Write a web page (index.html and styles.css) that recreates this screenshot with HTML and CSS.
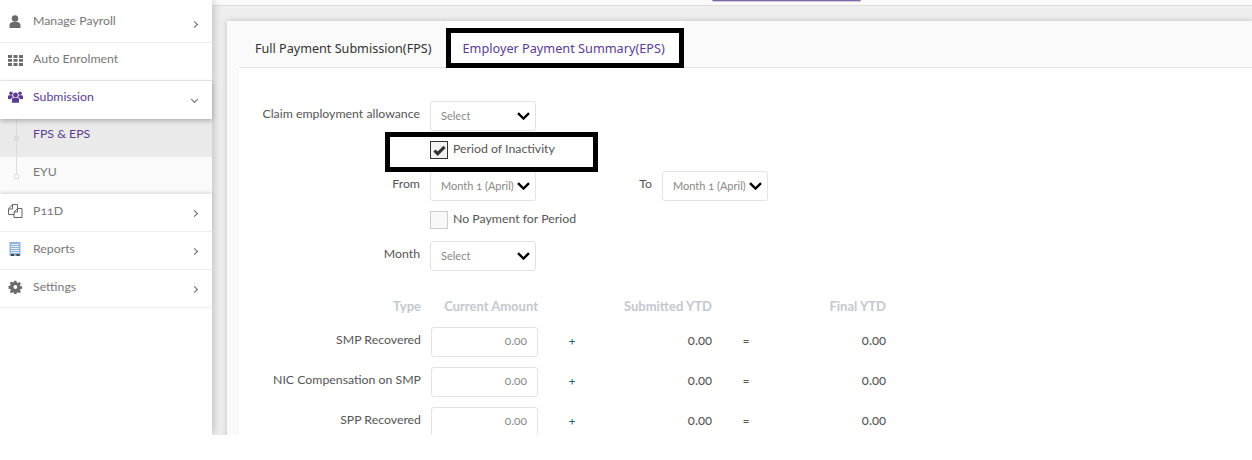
FILE: index.html
```html
<!DOCTYPE html>
<html lang="en">
<head>
<meta charset="utf-8">
<title>Submission</title>
<link rel="stylesheet" href="styles.css">
</head>
<body>
<div class="app">
  <aside class="sidebar">
    <ul class="menu">
      <li class="item">
        <svg class="ic" viewBox="0 0 15 14"><circle cx="7" cy="3.500" r="3.200"/><path d="M1.500 13V10C1.500 8 3.500 7 5 7H9C10.500 7 12.500 8 12.500 10V13Z"/></svg>
        <span class="lbl">Manage Payroll</span><span class="chev r"></span>
      </li>
      <li class="item">
        <svg class="ic" viewBox="0 0 15 14"><path d="M0 2h4v3H0zM5.500 2h4v3h-4zM11 2h4v3h-4zM0 6h4v2.800H0zM5.500 6h4v2.800h-4zM11 6h4v2.800h-4zM0 10h4v3H0zM5.500 10h4v3h-4zM11 10h4v3h-4z"/></svg>
        <span class="lbl">Auto Enrolment</span>
      </li>
      <li class="item open">
        <svg class="ic" viewBox="0 0 16 14"><circle cx="8" cy="4.800" r="2.600"/><circle cx="3.200" cy="3" r="1.900"/><circle cx="12.800" cy="3" r="1.900"/><path d="M4.200 13V9.800C4.200 8.500 5 7.800 6 7.800H10C11 7.800 11.800 8.500 11.800 9.800V13Z"/><path d="M0 9V6.500C0 5.500.7 5.200 1.500 5.200H4.500C4.800 6.200 5 6.800 5.500 7.200 4 7.500 3.300 8.300 3.200 9.500Z"/><path d="M16 9V6.500C16 5.500 15.300 5.200 14.500 5.200H11.500C11.200 6.200 11 6.800 10.500 7.200 12 7.500 12.700 8.300 12.800 9.500Z"/></svg>
        <span class="lbl">Submission</span><span class="chev d"></span>
      </li>
      <li class="sub active"><span class="dot"></span><span class="lbl">FPS &amp; EPS</span></li>
      <li class="sub last"><span class="dot"></span><span class="lbl">EYU</span></li>
      <li class="item after">
        <svg class="ic line" viewBox="0 0 15 14"><path d="M.5 5L4.500 .5H9.500V4.500M.5 5V10.500H6M.5 5H4.500V.5M6 8L9.500 4.500H14V13.500H6ZM6 8H9.500V4.500"/></svg>
        <span class="lbl">P11D</span><span class="chev r"></span>
      </li>
      <li class="item after">
        <svg class="ic" viewBox="0 0 15 14"><path d="M1.500 0h11v14h-11z" fill="#8fb3d9"/><path d="M3 2.500h8M3 4.500h8M3 6.500h8M3 8.500h8M3 10.500h8" stroke="#e6eef7" stroke-width="1"/><path d="M3 12h3v2H3zM8.500 12h3v2h-3z" fill="#444"/></svg>
        <span class="lbl">Reports</span><span class="chev r"></span>
      </li>
      <li class="item after">
        <svg class="ic" viewBox="0 0 15 14"><path fill-rule="evenodd" d="M5.800 0h2.400l.4 2 1.300.6 1.700-1.100 1.700 1.700-1.100 1.700.6 1.300 2 .4v2.400l-2 .4-.6 1.300 1.100 1.700-1.700 1.700-1.700-1.100-1.300.6-.4 2H5.800l-.4-2-1.300-.6-1.700 1.100-1.700-1.700 1.100-1.700-.6-1.300-2-.4V5.800l2-.4.600-1.300-1.100-1.700 1.700-1.700 1.700 1.100 1.300-.6zM7 4.800a2.200 2.200 0 1 0 0 4.400 2.200 2.200 0 0 0 0-4.400z" transform="translate(1.200 .8) scale(.88)"/></svg>
        <span class="lbl">Settings</span><span class="chev r"></span>
      </li>
    </ul>
  </aside>
  <div class="content">
    <div class="topbar"><span class="topbtn"></span></div>
    <main class="card">
      <nav class="tabs">
        <a class="tab">Full Payment Submission(FPS)</a>
        <a class="tab current">Employer Payment Summary(EPS)</a>
      </nav>
      <form class="form">
        <div class="row first">
          <label class="flabel">Claim employment allowance</label>
          <select class="sel"><option>Select</option></select>
        </div>
        <div class="row check-row">
          <span class="box checked"><svg viewBox="0 0 14 12"><path d="M1.500 6L5 9.500 12.500 2" fill="none" stroke="#333" stroke-width="3.400"/></svg></span>
          <span class="ctext">Period of Inactivity</span>
        </div>
        <div class="row period">
          <label class="flabel">From</label>
          <select class="sel"><option>Month 1 (April)</option></select>
          <label class="tolabel">To</label>
          <select class="sel"><option>Month 1 (April)</option></select>
        </div>
        <div class="row check-row">
          <span class="box"></span>
          <span class="ctext">No Payment for Period</span>
        </div>
        <div class="row month">
          <label class="flabel">Month</label>
          <select class="sel"><option>Select</option></select>
        </div>
        <div class="grid head">
          <span class="n">Type</span><span class="n">Current Amount</span><span></span><span class="n">Submitted YTD</span><span></span><span class="n">Final YTD</span>
        </div>
        <div class="grid">
          <span class="n name">SMP Recovered</span><input class="amount" value="0.00"><span class="op plus">+</span><span class="n val">0.00</span><span class="op">=</span><span class="n val">0.00</span>
        </div>
        <div class="grid">
          <span class="n name">NIC Compensation on SMP</span><input class="amount" value="0.00"><span class="op plus">+</span><span class="n val">0.00</span><span class="op">=</span><span class="n val">0.00</span>
        </div>
        <div class="grid">
          <span class="n name">SPP Recovered</span><input class="amount" value="0.00"><span class="op plus">+</span><span class="n val">0.00</span><span class="op">=</span><span class="n val">0.00</span>
        </div>
      </form>
    </main>
  </div>
  <div class="mark mark-tab"></div>
  <div class="mark mark-check"></div>
</div>
</body>
</html>
```
FILE: styles.css
```css
* { box-sizing: border-box; }
html, body { margin: 0; background: #fff; }
body { font-family: Lato, sans-serif; font-size: 12.3px; font-feature-settings: "onum" 1; color: #555; height: 460px; overflow: hidden; }
.app { position: relative; display: flex; height: 435px; overflow: hidden; background: #eee; }

.sidebar { width: 212px; flex: none; background: #fff; padding-top: 5px; box-shadow: 2px 0 8px rgba(0,0,0,.18); z-index: 2; }
.menu { list-style: none; margin: 0; padding: 0; }
.item { position: relative; display: flex; align-items: center; height: 38px; padding: 0 15px 6px 8px; border-bottom: 1px solid #eee; background: #fff; color: #777; }
.item .ic { margin-top: 2px; }
.item.open { border-bottom: 0; color: #5b3c93; box-shadow: 0 2px 5px rgba(0,0,0,.25); z-index: 1; padding-bottom: 8px; }
.item.after { padding-bottom: 4px; }
.item.after .ic { margin-top: 0; }
.sub.last + .item.after { box-shadow: 0 -2px 3px rgba(0,0,0,.1); }
.lbl { flex: 1; margin-left: 10px; }
.ic { width: 15px; height: 14px; fill: #6b6b6b; flex: none; }
.item.open .ic { fill: #5b3c93; }
.ic.line { fill: none; stroke: #666; stroke-width: 1; }
.chev { width: 5px; height: 5px; border-right: 1px solid #666; border-top: 1px solid #666; margin-top: 8px; }
.chev.r { transform: rotate(45deg); }
.item.after .chev { margin-top: 6px; }
.chev.d { transform: rotate(135deg); margin-top: 6px; }
.sub { position: relative; display: flex; align-items: center; height: 38px; padding: 0 0 10px 23px; background: #fafafa; color: #777; }
.sub.active { background: #eaeaea; color: #5b3c93; }
.sub.last { height: 37px; padding-bottom: 9px; }
.sub::before { content: ""; position: absolute; left: 16px; top: 0; bottom: 0; width: 1px; background: #ddd; }
.sub.last::before { bottom: 18px; }
.dot { position: absolute; left: 14px; top: 17px; width: 5px; height: 5px; background: #ddd; }
.sub.last .dot { background: #fff; border: 1px solid #ddd; }

.content { flex: 1; min-width: 0; display: flex; flex-direction: column; }
.topbar { position: relative; height: 6px; background: #fafafa; border-bottom: 1px solid #ddd; flex: none; }
.topbtn { position: absolute; left: 500px; top: 0; width: 149px; height: 2px; background: #7e66b5; border-radius: 0 0 4px 4px; border-bottom: 1px solid #ccc; }
.card { margin: 15px 0 0 15px; flex: 1; background: #fafafa; box-shadow: 0 0 6px rgba(0,0,0,.2); padding-left: 12px; }
.tabs { display: flex; height: 47px; border-bottom: 1px solid #e5e5e5; position: relative; }
.tab { padding: 21px 0 0 16px; color: #333; font-family: "Noto Sans", sans-serif; font-size: 12.6px; line-height: 14px; }
.tab.current { margin-left: 14px; padding: 20px 16px 0 17px; background: #fff; color: #5b3c93; width: 238px; height: 46px; font-size: 12.7px; }

.form { padding-top: 33px; background: #fff; height: 400px; }
.row { display: flex; align-items: center; height: 30px; }
.flabel { width: 181px; margin-right: 10px; text-align: right; color: #555; padding-bottom: 6px; }
.sel { appearance: none; -webkit-appearance: none; width: 106px; height: 30px; border: 1px solid #e3e3e3; border-radius: 3px; color: #888; font: 11px Lato, sans-serif; font-feature-settings: "onum" 1; padding: 0 0 2px 10px; background: #fff url("data:image/svg+xml,%3Csvg xmlns='http://www.w3.org/2000/svg' width='13' height='8'%3E%3Cpath d='M1 1.200L6.500 6.500 12 1.200' fill='none' stroke='%23000' stroke-width='2.400'/%3E%3C/svg%3E") no-repeat right 5px center; }
.check-row { height: 18px; margin: 10px 0 0 191px; }
.box { display: flex; align-items: center; justify-content: center; width: 18px; height: 18px; border: 1px solid #ccc; background: #f8f8f8; margin-right: 5px; }
.box.checked { border-color: #333; background: #f2f2f2; }
.box svg { width: 13px; height: 11px; }
.ctext { color: #555; padding-bottom: 4px; }
.period { margin-top: 12px; }
.tolabel { width: 126px; padding: 0 10px 6px 0; text-align: right; }
.month { margin-top: 12px; }
.grid { display: grid; grid-template-columns: 182px 117px 68px 106px 68px 106px; align-items: center; height: 30px; margin-top: 10px; }
.grid.head { height: 14px; margin-top: 27px; margin-bottom: 15px; font-weight: 700; font-size: 13px; color: #c3c8d0; }
.n { text-align: right; }
.name { color: #555; padding-bottom: 6px; }
.grid > .amount { margin-left: 10px; }
.amount { width: 107px; height: 30px; border: 1px solid #e3e3e3; border-radius: 3px; text-align: right; padding: 0 10px 4px; color: #888; font: 12px Lato, sans-serif; font-feature-settings: "onum" 1; background: #fff; }
.op { text-align: center; color: #555; padding-bottom: 3px; }
.op.plus { color: #2a5a8a; }
.val { color: #555; padding-bottom: 5px; font-size: 13px; }

.mark { position: absolute; border: 5px solid #000; pointer-events: none; z-index: 5; }
.mark-tab { left: 446px; top: 28px; width: 238px; height: 40px; }
.mark-check { left: 385px; top: 132px; width: 213px; height: 40px; }
```
